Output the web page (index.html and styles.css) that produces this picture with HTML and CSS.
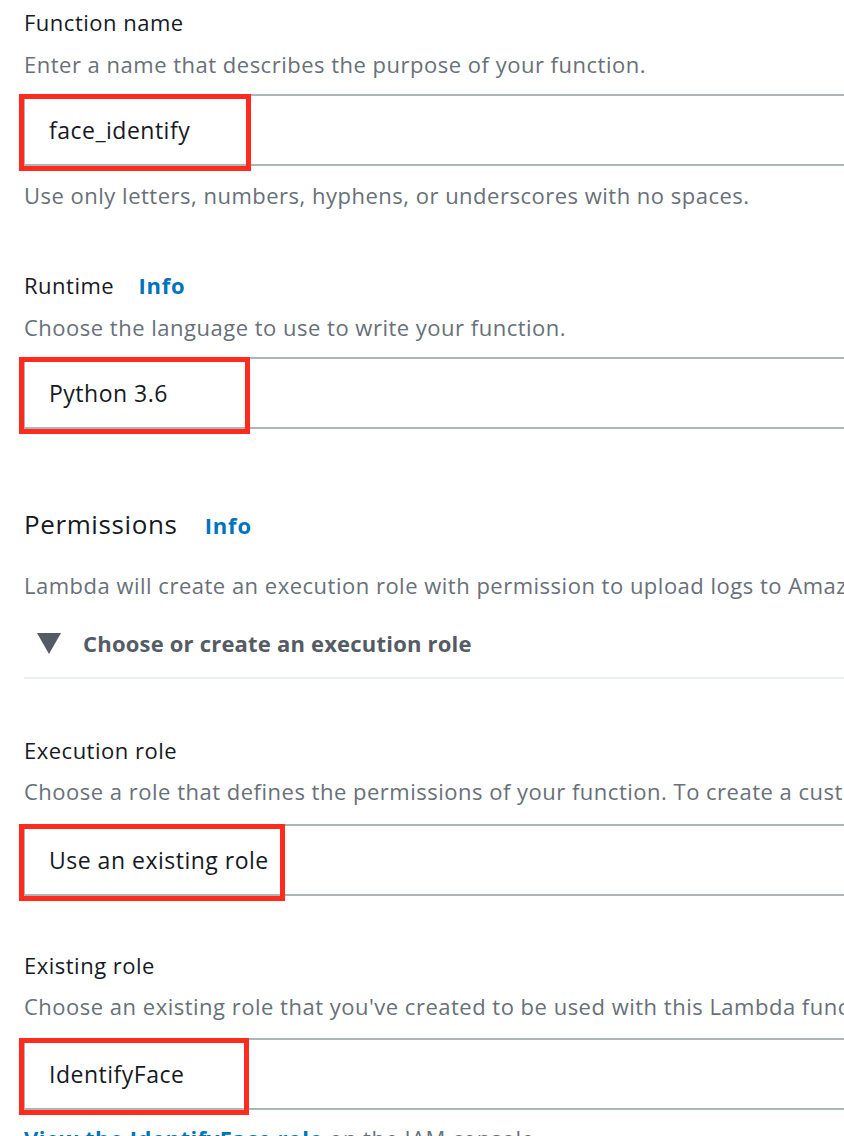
FILE: index.html
```html
<!DOCTYPE html>
<html lang="en">
<head>
<meta charset="utf-8">
<title>Create function</title>
<link rel="stylesheet" href="styles.css">
</head>
<body>
<main class="form">
  <section class="field">
    <div class="label">Function name</div>
    <div class="desc">Enter a name that describes the purpose of your function.</div>
    <div class="input"><span class="value">face_identify</span><span class="mark mark-name"></span></div>
    <div class="desc help">Use only letters, numbers, hyphens, or underscores with no spaces.</div>
  </section>

  <section class="field field-runtime">
    <div class="label">Runtime <a class="info">Info</a></div>
    <div class="desc">Choose the language to use to write your function.</div>
    <div class="input"><span class="value">Python 3.6</span><span class="mark mark-runtime"></span></div>
  </section>

  <section class="permissions">
    <h2 class="heading">Permissions <a class="info">Info</a></h2>
    <div class="desc perm-desc">Lambda will create an execution role with permission to upload logs to Amazon CloudWatch Logs. You can configure and modify permissions further when you add triggers.</div>
    <div class="expander">
      <svg class="caret" width="24" height="21" viewBox="0 0 24 21"><path d="M0 0H24L12 21Z" fill="#545b64"/></svg>
      <span>Choose or create an execution role</span>
    </div>
    <div class="divider"></div>

    <div class="field field-role">
      <div class="label">Execution role</div>
      <div class="desc">Choose a role that defines the permissions of your function. To create a custom role, go to the IAM console.</div>
      <div class="input"><span class="value">Use an existing role</span><span class="mark mark-role"></span></div>
    </div>

    <div class="field field-existing">
      <div class="label">Existing role</div>
      <div class="desc">Choose an existing role that you've created to be used with this Lambda function. The role must have permission to upload logs to Amazon CloudWatch Logs.</div>
      <div class="input"><span class="value">IdentifyFace</span><span class="mark mark-existing"></span></div>
      <div class="desc help"><a class="link">View the IdentifyFace role</a> on the IAM console.</div>
    </div>
  </section>
</main>
</body>
</html>
```

FILE: styles.css
```css
html, body {
  margin: 0;
  padding: 0;
  background: #ffffff;
  overflow: hidden;
}

body {
  font-family: "Open Sans", "Noto Sans", Arial, sans-serif;
  font-size: 22px;
  letter-spacing: 0.5px;
  color: #16191f;
}

.form {
  padding: 7px 0 0 24px;
  width: 1400px;
}

.label {
  line-height: 30px;
  color: #16191f;
  white-space: nowrap;
}

.desc {
  margin-top: 12px;
  line-height: 30px;
  color: #687078;
  white-space: nowrap;
}

.help {
  margin-top: 14px;
}

.info {
  font-weight: 700;
  font-size: 22px;
  letter-spacing: 0.8px;
  color: #0073bb;
  margin-left: 18px;
}

.input {
  position: relative;
  margin-top: 15px;
  height: 68px;
  border: 2px solid #aab7b8;
  border-right: none;
  border-left-width: 1px;
  display: flex;
  align-items: center;
  padding-left: 24px;
}

.value {
  font-size: 23px;
  line-height: 30px;
  color: #16191f;
}

.mark {
  position: absolute;
  left: -6px;
  top: -2px;
  bottom: -7px;
  border: 5px solid #ff2b1f;
}

.mark-name { width: 222px; }
.mark-runtime { width: 221px; }
.mark-role { width: 256px; }
.mark-existing { width: 220px; }

.field-runtime {
  margin-top: 60px;
}

.permissions {
  margin-top: 77px;
}

.heading {
  margin: 0;
  font-size: 26px;
  letter-spacing: 0.6px;
  font-weight: 400;
  line-height: 36px;
  color: #16191f;
}

.heading .info {
  margin-left: 20px;
}

.perm-desc {
  margin-top: 27px;
}

.expander {
  margin-top: 28px;
  display: flex;
  align-items: center;
  gap: 22px;
  padding-left: 13px;
  line-height: 30px;
  font-weight: 700;
  letter-spacing: 0.2px;
  color: #545b64;
}

.caret {
  flex: none;
}

.divider {
  margin-top: 19px;
  height: 2px;
  background: #eaeded;
}

.field-role {
  margin-top: 56px;
}

.field-role .desc {
  margin-top: 11px;
}

.field-role .input {
  margin-top: 18px;
}

.field-existing {
  margin-top: 54px;
}

.field-existing .desc {
  margin-top: 11px;
}

.field-existing .input {
  margin-top: 17px;
}

.field-existing .help {
  margin-top: 13px;
}

.link {
  font-weight: 700;
  color: #0073bb;
}
```
